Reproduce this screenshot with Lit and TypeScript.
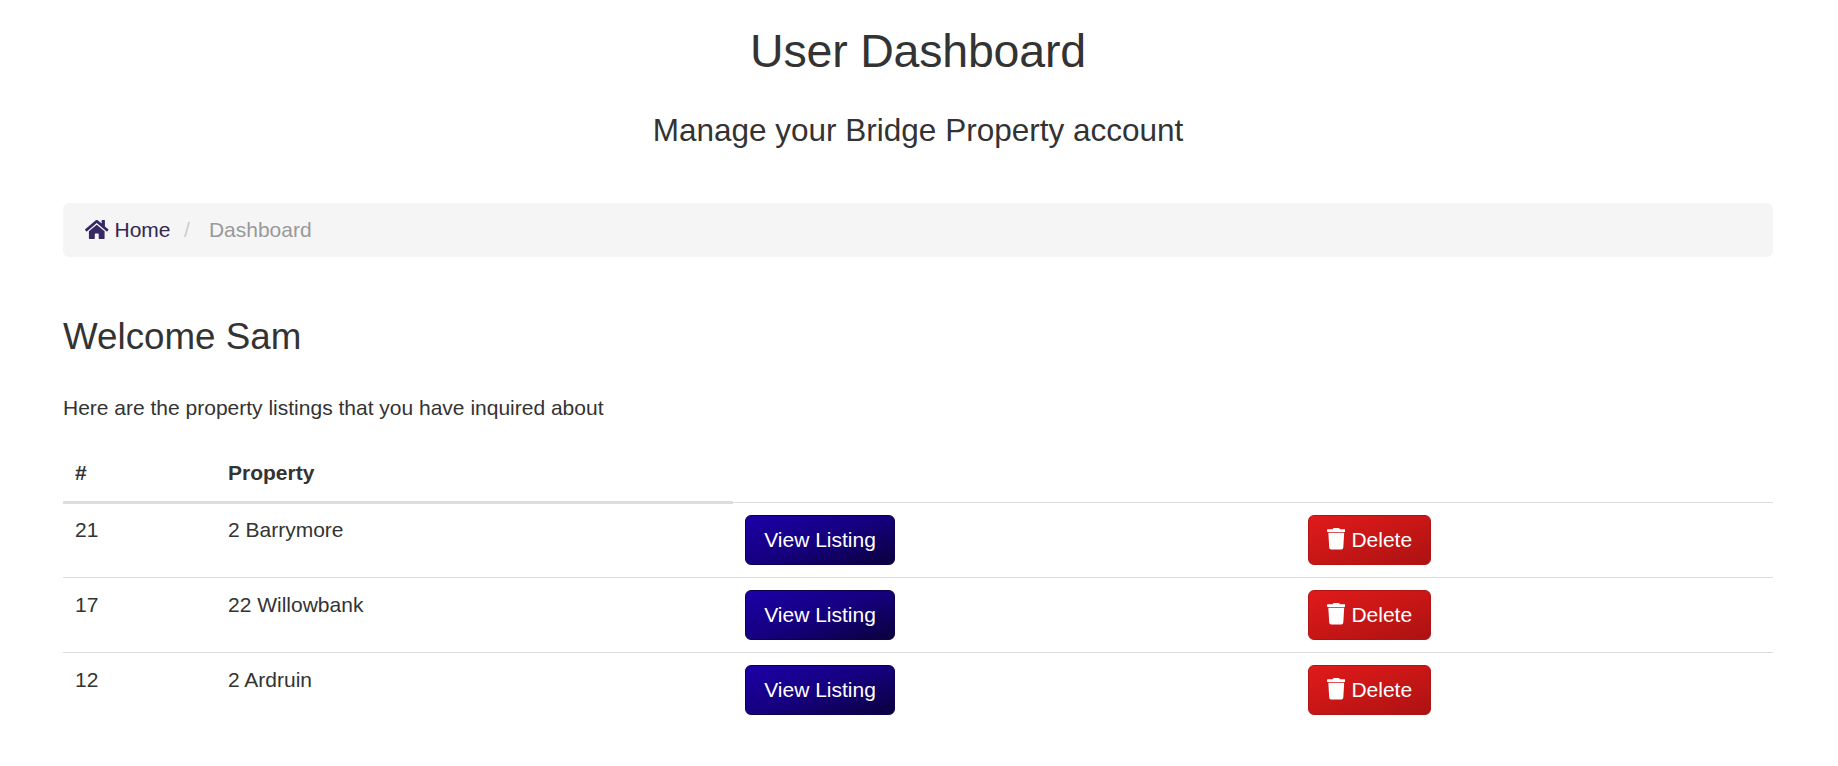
import { LitElement, html, css } from "lit";
import { customElement, property } from "lit/decorators.js";

interface Listing {
  id: number;
  name: string;
}

@customElement("listing-row")
class ListingRow extends LitElement {
  @property({ attribute: false }) listing!: Listing;

  static styles = css`
    :host {
      display: grid;
      grid-template-columns: 153px 517px 563px 1fr;
      align-items: start;
      box-sizing: border-box;
      height: 75px;
      padding-top: 12px;
      border-top: 1px solid #ddd;
    }
    :host([first]) {
      height: 73px;
      padding-top: 11px;
      border-top: none;
    }
    .cell {
      padding-left: 12px;
      line-height: 30px;
    }
    .btn {
      display: flex;
      align-items: center;
      justify-content: center;
      box-sizing: border-box;
      height: 50px;
      padding: 0;
      border: 1px solid;
      border-radius: 6px;
      color: #fff;
      font: inherit;
    }
    .view {
      width: 150px;
      border-color: #0c0050;
      background: linear-gradient(160deg, #1c00a8 0%, #16007f 50%, #0a003c 100%);
    }
    .delete {
      width: 123px;
      gap: 6px;
      border-color: #b01515;
      background: linear-gradient(160deg, #e01a1a 0%, #c81616 50%, #ac1212 100%);
    }
    .trash {
      width: 18.500px;
      height: 21.500px;
      margin-top: -2px;
    }
  `;

  render() {
    return html`
      <div class="cell">${this.listing.id}</div>
      <div class="cell">${this.listing.name}</div>
      <div class="cell"><button class="btn view">View Listing</button></div>
      <div class="cell">
        <button class="btn delete">
          <svg class="trash" viewBox="0 0 448 512" preserveAspectRatio="none" fill="currentColor">
            <path
              d="M432 32H312l-9.400-18.700A24 24 0 0 0 281.100 0H166.800a23.700 23.700 0 0 0-21.400 13.300L136 32H16A16 16 0 0 0 0 48v32a16 16 0 0 0 16 16h416a16 16 0 0 0 16-16V48a16 16 0 0 0-16-16zM53.200 467a48 48 0 0 0 47.900 45h245.800a48 48 0 0 0 47.900-45L416 114H32z"
            />
          </svg>
          <span>Delete</span>
        </button>
      </div>
    `;
  }
}

@customElement("app-root")
class AppRoot extends LitElement {
  private listings: Listing[] = [
    { id: 21, name: "2 Barrymore" },
    { id: 17, name: "22 Willowbank" },
    { id: 12, name: "2 Ardruin" },
  ];

  static styles = css`
    :host {
      display: block;
      box-sizing: border-box;
      min-height: 766px;
      padding: 26px 65px 0 63px;
      background: #fff;
      color: #333;
      font-family: "Liberation Sans", Arial, sans-serif;
      font-size: 21px;
      line-height: 30px;
    }
    h1,
    h2,
    h3,
    p {
      margin: 0;
      font-weight: 400;
    }
    h1 {
      font-size: 46.500px;
      line-height: 50px;
      letter-spacing: -0.200px;
      text-align: center;
    }
    h2 {
      margin-top: 37px;
      font-size: 31.500px;
      line-height: 34px;
      text-align: center;
    }
    .breadcrumb {
      display: flex;
      align-items: center;
      height: 54px;
      margin-top: 56px;
      padding-left: 22px;
      border-radius: 6px;
      background: #f5f5f5;
    }
    .house {
      width: 23.500px;
      height: 19px;
      margin: 0 6px 1px 0;
      fill: #362864;
    }
    .home {
      color: #332852;
    }
    .slash {
      margin: 0 19px 0 13.500px;
      color: #ccc;
    }
    .current {
      color: #999;
    }
    h3 {
      margin-top: 60px;
      font-size: 36.750px;
      line-height: 40px;
    }
    p {
      margin-top: 36px;
    }
    .head {
      display: grid;
      grid-template-columns: 153px 517px 1fr;
      height: 61px;
      margin-top: 20px;
      font-weight: 700;
    }
    .th {
      box-sizing: border-box;
      padding: 15px 12px 0;
      border-bottom: 3px solid #ddd;
    }
    .th.blank {
      margin-bottom: 1px;
      border-bottom-width: 1px;
    }
  `;

  render() {
    return html`
      <h1>User Dashboard</h1>
      <h2>Manage your Bridge Property account</h2>
      <nav class="breadcrumb">
        <svg class="house" viewBox="0 32 576 448" preserveAspectRatio="none">
          <path
            d="M280.370 148.260L96 300.110V464a16 16 0 0 0 16 16l112.060-.290a16 16 0 0 0 15.920-16V368a16 16 0 0 1 16-16h64a16 16 0 0 1 16 16v95.640a16 16 0 0 0 16 16.050L464 480a16 16 0 0 0 16-16V300L295.670 148.260a12.190 12.190 0 0 0-15.300 0zM571.600 251.470L488 182.560V44.050a12 12 0 0 0-12-12h-56a12 12 0 0 0-12 12v72.610L318.470 43a48 48 0 0 0-61 0L4.340 251.470a12 12 0 0 0-1.600 16.900l25.500 31A12 12 0 0 0 45.150 301l235.220-193.740a12.190 12.190 0 0 1 15.300 0L530.900 301a12 12 0 0 0 16.900-1.600l25.500-31a12 12 0 0 0-1.700-16.930z"
          />
        </svg>
        <span class="home">Home</span>
        <span class="slash">/</span>
        <span class="current">Dashboard</span>
      </nav>
      <h3>Welcome Sam</h3>
      <p>Here are the property listings that you have inquired about</p>
      <div class="head">
        <div class="th">#</div>
        <div class="th">Property</div>
        <div class="th blank"></div>
      </div>
      ${this.listings.map(
        (item, i) => html`<listing-row .listing=${item} ?first=${i === 0}></listing-row>`
      )}
    `;
  }
}
